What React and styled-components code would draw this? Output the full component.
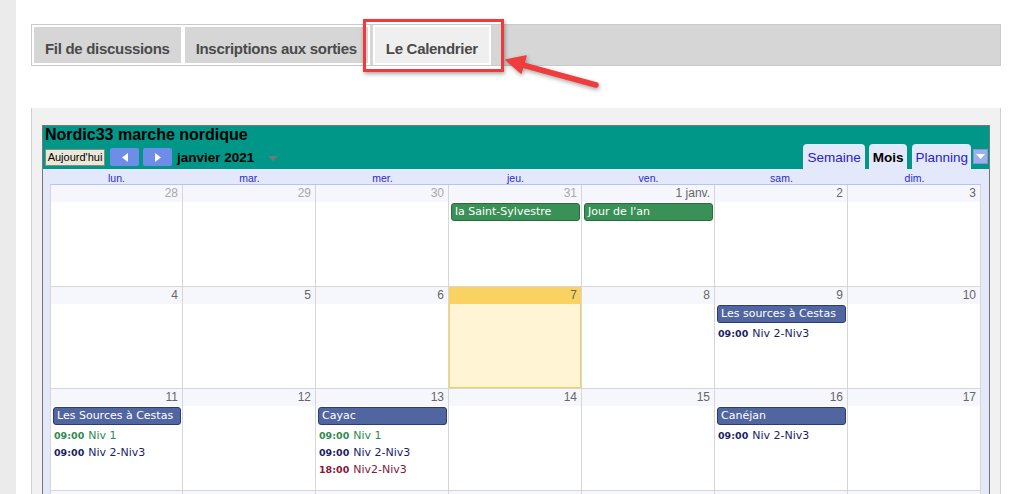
import React from "react";
import styled, { createGlobalStyle } from "styled-components";

const Global = createGlobalStyle`
  html, body { margin: 0; padding: 0; background: #fff; overflow: hidden; }
  body { font-family: "Liberation Sans", Arial, sans-serif; }
  * { box-sizing: border-box; }
`;

const Page = styled.div`
  display: flex;
  height: 494px;
  overflow: hidden;
`;

const LeftStrip = styled.div`
  width: 16px;
  flex: none;
  background: #ebebeb;
`;

const Main = styled.div`
  flex: 1;
  padding: 24px 10px 0 15px;
`;

const TabBar = styled.div`
  position: relative;
  display: flex;
  width: 970px;
  height: 42px;
  border: 1px solid #cacaca;
  background: #d6d6d6;
`;

const Tab = styled.div`
  display: flex;
  align-items: center;
  padding: 6px 11px 0 11px;
  border: 2px solid #fff;
  margin-right: ${(p) => (p.$gap ? "3px" : "0")};
  background: ${(p) => (p.$active ? "#efefef" : "#d6d6d6")};
  color: #4a4a4a;
  font-weight: bold;
  font-size: 15px;
  letter-spacing: -0.3px;
  white-space: nowrap;
`;

const Highlight = styled.div`
  position: absolute;
  left: 331px;
  top: -6px;
  width: 141px;
  height: 53px;
  border: 3px solid #ee3a3a;
  box-shadow: 1px 2px 4px rgba(0, 0, 0, 0.35);
  pointer-events: none;
`;

const Arrow = styled.svg`
  position: absolute;
  left: 467px;
  top: 24px;
  overflow: visible;
  filter: drop-shadow(1px 2px 2px rgba(0, 0, 0, 0.35));
`;

const CalendarWrap = styled.div`
  margin-top: 42px;
  width: 970px;
  background: #f1f1f1;
  border-left: 1px solid #cfcfcf;
  border-right: 1px solid #cfcfcf;
  padding: 17px 10px 0 10px;
  height: 400px;
`;

const Calendar = styled.div`
  width: 948px;
  border: 1px solid #777;
  border-bottom: none;
  background: #e3e8fa;
`;

const Header = styled.div`
  display: flex;
  justify-content: space-between;
  align-items: flex-end;
  height: 43px;
  background: #009688;
  padding: 0 1px 0 2px;
`;

const HeaderLeft = styled.div`
  display: flex;
  flex-direction: column;
  padding-bottom: 3px;
`;

const Title = styled.div`
  font-size: 16px;
  font-weight: bold;
  color: #000;
  line-height: 18px;
`;

const NavRow = styled.div`
  display: flex;
  align-items: center;
  gap: 4px;
  margin-top: 4px;
  height: 18px;
`;

const TodayButton = styled.div`
  height: 17px;
  width: 60px;
  display: flex;
  align-items: center;
  justify-content: center;
  background: #ebe8d9;
  border: 1px solid #8a8a80;
  font-size: 11px;
  color: #000;
  margin-right: 1px;
`;

const NavButton = styled.div`
  width: 29px;
  height: 18px;
  display: flex;
  align-items: center;
  justify-content: center;
  background: #6d8de9;
  border-radius: 2px;
`;

const MonthLabel = styled.div`
  font-size: 13.5px;
  font-weight: bold;
  color: #000;
  margin-left: 1px;
`;

const MonthCaret = styled.span`
  width: 0;
  height: 0;
  border-left: 5px solid transparent;
  border-right: 5px solid transparent;
  border-top: 5px solid #6e7a78;
  margin-left: 10px;
  margin-top: 2px;
`;

const ViewTabs = styled.div`
  display: flex;
  align-items: flex-end;
`;

const ViewTab = styled.div`
  height: 25px;
  display: flex;
  align-items: center;
  padding: 1px ${(p) => p.$px}px 0;
  margin-right: ${(p) => p.$mr}px;
  background: #e3e8fa;
  border-radius: 4px 4px 0 0;
  font-size: 13.5px;
  color: ${(p) => (p.$active ? "#000" : "#2a20c8")};
  font-weight: ${(p) => (p.$active ? "bold" : "normal")};
`;

const ViewMenu = styled.div`
  width: 15px;
  height: 15px;
  margin-bottom: 5px;
  background: #9cb0ea;
  border: 1px solid #8495cf;
  display: flex;
  align-items: center;
  justify-content: center;
`;

const Body = styled.div`
  padding: 0 8px 0 7px;
`;

const DayNames = styled.div`
  display: grid;
  grid-template-columns: repeat(7, 133px);
  height: 16px;
  border-bottom: 1px solid #b7c4ee;
`;

const DayName = styled.div`
  text-align: center;
  font-size: 10.5px;
  line-height: 18px;
  height: 15px;
  color: #2a2ad0;
`;

const Week = styled.div`
  display: grid;
  grid-template-columns: repeat(7, 133px);
  height: 102px;
  background: #fff;
  border-bottom: 1px solid #d6d6d6;
`;

const Cell = styled.div`
  position: relative;
  border-right: 1px solid #d6d6d6;
  border-left: ${(p) => (p.$first ? "1px solid #d6d6d6" : "none")};
  background: ${(p) => (p.$today ? "#fff5d5" : "#fff")};
  box-shadow: ${(p) => (p.$today ? "inset 0 0 0 1px #f7cf5a" : "none")};
  overflow: hidden;
`;

const DayNum = styled.div`
  height: 17px;
  line-height: 17px;
  text-align: right;
  padding-right: 4px;
  font-size: 12px;
  color: ${(p) => (p.$out ? "#a8a8a8" : "#666")};
  background: ${(p) => (p.$today ? "#fad261" : "#f6f7fd")};
`;

const EventBar = styled.div`
  margin: 1px 1px 0 2px;
  height: 18px;
  line-height: 16px;
  padding: 0 3px;
  border-radius: 3px;
  border: 1px solid ${(p) => (p.$green ? "#2a6b3c" : "#2a3d72")};
  background: ${(p) => (p.$green ? "#3a9157" : "#5166a0")};
  color: #fff;
  font-family: "DejaVu Sans", Verdana, sans-serif;
  font-size: 11px;
  white-space: nowrap;
  overflow: hidden;
`;

const TimedList = styled.div`
  margin-top: 2px;
`;

const Timed = styled.div`
  height: 17px;
  line-height: 17px;
  padding-left: 3px;
  font-family: "DejaVu Sans", Verdana, sans-serif;
  font-size: 11px;
  color: ${(p) => p.$color};
  white-space: nowrap;
`;

const Time = styled.b`
  font-size: 9.5px;
  margin-right: 4px;
`;

const COLORS = { g: "#2f8a4e", n: "#1d1d66", r: "#8a1538" };

const weeks = [
  [
    { d: "28", out: true },
    { d: "29", out: true },
    { d: "30", out: true },
    { d: "31", out: true, bar: { t: "la Saint-Sylvestre", green: true } },
    { d: "1 janv.", bar: { t: "Jour de l'an", green: true } },
    { d: "2" },
    { d: "3" },
  ],
  [
    { d: "4" },
    { d: "5" },
    { d: "6" },
    { d: "7", today: true },
    { d: "8" },
    { d: "9", bar: { t: "Les sources à Cestas" }, timed: [["09:00", "Niv 2-Niv3", "n"]] },
    { d: "10" },
  ],
  [
    {
      d: "11",
      bar: { t: "Les Sources à Cestas" },
      timed: [
        ["09:00", "Niv 1", "g"],
        ["09:00", "Niv 2-Niv3", "n"],
      ],
    },
    { d: "12" },
    {
      d: "13",
      bar: { t: "Cayac" },
      timed: [
        ["09:00", "Niv 1", "g"],
        ["09:00", "Niv 2-Niv3", "n"],
        ["18:00", "Niv2-Niv3", "r"],
      ],
    },
    { d: "14" },
    { d: "15" },
    { d: "16", bar: { t: "Canéjan" }, timed: [["09:00", "Niv 2-Niv3", "n"]] },
    { d: "17" },
  ],
  ["18", "19", "20", "21", "22", "23", "24"].map((d) => ({ d })),
  ["25", "26", "27", "28", "29", "30", "31"].map((d) => ({ d })),
];

const dayNames = ["lun.", "mar.", "mer.", "jeu.", "ven.", "sam.", "dim."];

export default function App() {
  return (
    <>
      <Global />
      <Page>
        <LeftStrip />
        <Main>
          <TabBar>
            <Tab>Fil de discussions</Tab>
            <Tab $gap>Inscriptions aux sorties</Tab>
            <Tab $active>Le Calendrier</Tab>
            <Highlight />
            <Arrow width="110" height="45" viewBox="0 0 110 45">
              <line x1="22" y1="15.5" x2="97" y2="36" stroke="#f03c3c" strokeWidth="5.5" strokeLinecap="round" />
              <polygon points="7,11 27,7 22,24" fill="#f03c3c" stroke="#f03c3c" strokeWidth="1.5" strokeLinejoin="round" />
            </Arrow>
          </TabBar>

          <CalendarWrap>
            <Calendar>
              <Header>
                <HeaderLeft>
                  <Title>Nordic33 marche nordique</Title>
                  <NavRow>
                    <TodayButton>Aujourd'hui</TodayButton>
                    <NavButton>
                      <svg width="6" height="9" viewBox="0 0 6 9">
                        <polygon points="6,0 6,9 0,4.5" fill="#fff" />
                      </svg>
                    </NavButton>
                    <NavButton>
                      <svg width="6" height="9" viewBox="0 0 6 9">
                        <polygon points="0,0 0,9 6,4.5" fill="#fff" />
                      </svg>
                    </NavButton>
                    <MonthLabel>janvier 2021</MonthLabel>
                    <MonthCaret />
                  </NavRow>
                </HeaderLeft>
                <ViewTabs>
                  <ViewTab $px={4} $mr={4}>Semaine</ViewTab>
                  <ViewTab $px={4} $mr={5} $active>
                    Mois
                  </ViewTab>
                  <ViewTab $px={3} $mr={2}>Planning</ViewTab>
                  <ViewMenu>
                    <svg width="9" height="5" viewBox="0 0 9 5">
                      <polygon points="0,0 9,0 4.5,5" fill="#fff" />
                    </svg>
                  </ViewMenu>
                </ViewTabs>
              </Header>
              <Body>
                <DayNames>
                  {dayNames.map((n) => (
                    <DayName key={n}>{n}</DayName>
                  ))}
                </DayNames>
                {weeks.map((w, wi) => (
                  <Week key={wi}>
                    {w.map((c, ci) => (
                      <Cell key={ci} $first={ci === 0} $today={c.today}>
                        <DayNum $out={c.out} $today={c.today}>
                          {c.d}
                        </DayNum>
                        {c.bar && <EventBar $green={c.bar.green}>{c.bar.t}</EventBar>}
                        {c.timed && (
                          <TimedList>
                            {c.timed.map(([t, l, col], i) => (
                              <Timed key={i} $color={COLORS[col]}>
                                <Time>{t}</Time>
                                {l}
                              </Timed>
                            ))}
                          </TimedList>
                        )}
                      </Cell>
                    ))}
                  </Week>
                ))}
              </Body>
            </Calendar>
          </CalendarWrap>
        </Main>
      </Page>
    </>
  );
}
